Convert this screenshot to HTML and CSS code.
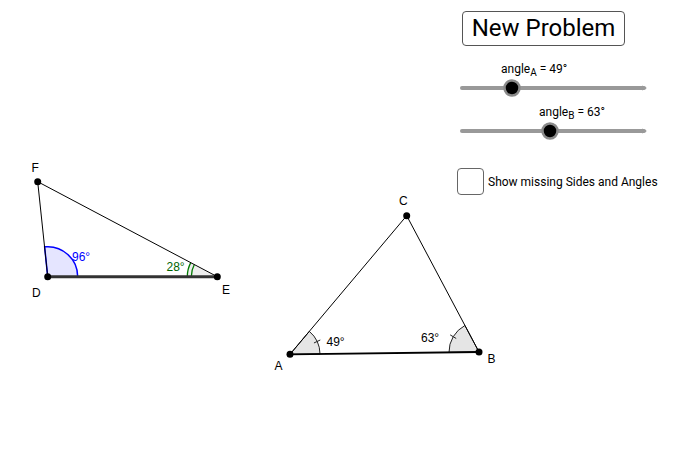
FILE: index.html
```html
<!DOCTYPE html>
<html>
<head>
<meta charset="utf-8">
<link rel="stylesheet" href="styles.css">
</head>
<body>
<div class="stage">
  <svg class="canvas" width="684" height="469" viewBox="0 0 684 469">
    <!-- Triangle DEF -->
    <path class="sector-blue" d="M47.7 276.7 L77.7 276.7 A30 30 0 0 0 44.64 246.86 Z"/>
    <path class="sector-gray" d="M217.3 276.7 L187.3 276.7 A30 30 0 0 1 190.78 262.67 Z"/>
    <path class="arc-green" d="M187.3 276.7 A30 30 0 0 1 190.78 262.67"/>
    <path class="arc-green" d="M191.3 276.7 A26 26 0 0 1 194.32 264.54"/>
    <line class="side" x1="37.7" y1="181.7" x2="47.7" y2="276.7"/>
    <line class="side" x1="37.7" y1="181.7" x2="217.3" y2="276.7"/>
    <line class="side-thick" x1="47.7" y1="276.7" x2="217.3" y2="276.7"/>

    <!-- Triangle ABC -->
    <path class="sector-gray2" d="M290 354.3 L320 353.94 A30 30 0 0 0 309.32 331.35 Z"/>
    <path class="sector-gray2" d="M479 352 L449 352.37 A30 30 0 0 1 464.94 325.5 Z"/>
    <line class="tick" x1="313.96" y1="342.98" x2="320.28" y2="339.99"/>
    <line class="tick" x1="456.21" y1="338.47" x2="450.19" y2="334.9"/>
    <line class="side" x1="290" y1="354.3" x2="406.7" y2="215.7"/>
    <line class="side" x1="479" y1="352" x2="406.7" y2="215.7"/>
    <line class="side-mid" x1="290" y1="354.3" x2="479" y2="352"/>

    <!-- points -->
    <circle class="pt" cx="37.7" cy="181.7" r="3.5"/>
    <circle class="pt" cx="47.7" cy="276.7" r="3.5"/>
    <circle class="pt" cx="217.3" cy="276.7" r="3.5"/>
    <circle class="pt" cx="290" cy="354.3" r="3.5"/>
    <circle class="pt" cx="479" cy="352" r="3.5"/>
    <circle class="pt" cx="406.7" cy="215.7" r="3.5"/>

    <!-- labels -->
    <text class="lbl" x="31.5" y="172">F</text>
    <text class="lbl" x="32" y="297">D</text>
    <text class="lbl" x="222" y="294">E</text>
    <text class="lbl" x="399" y="205">C</text>
    <text class="lbl" x="274.5" y="370">A</text>
    <text class="lbl" x="487.5" y="363">B</text>
    <text class="lbl blue" x="72" y="261">96°</text>
    <text class="lbl green" x="166.5" y="271">28°</text>
    <text class="lbl" x="326.5" y="346">49°</text>
    <text class="lbl" x="421" y="342">63°</text>

    <!-- sliders -->
    <line class="track" x1="462" y1="88" x2="644" y2="88"/>
    <path class="arrow" d="M642 85.5 L647 88 L642 90.5 Z"/>
    <circle class="knob" cx="512" cy="88" r="7.5"/>
    <text class="slabel" x="501" y="73">angle<tspan class="sub" dy="3">A</tspan><tspan dy="-3"> = 49°</tspan></text>

    <line class="track" x1="462" y1="131" x2="644" y2="131"/>
    <path class="arrow" d="M642 128.5 L647 131 L642 133.5 Z"/>
    <circle class="knob" cx="550" cy="131" r="7.5"/>
    <text class="slabel" x="539" y="116">angle<tspan class="sub" dy="3">B</tspan><tspan dy="-3"> = 63°</tspan></text>
  </svg>

  <button class="newbtn">New Problem</button>

  <label class="check">
    <span class="box"></span>
    <span class="check-text">Show missing Sides and Angles</span>
  </label>
</div>
</body>
</html>
```

FILE: styles.css
```css
html, body {
  margin: 0;
  padding: 0;
  background: #ffffff;
  overflow: hidden;
}

.stage {
  position: relative;
  width: 684px;
  height: 469px;
  background: #ffffff;
}

.canvas {
  position: absolute;
  left: 0;
  top: 0;
}

.side {
  stroke: #000000;
  stroke-width: 1;
}

.side-mid {
  stroke: #000000;
  stroke-width: 1.8;
}

.side-thick {
  stroke: #333333;
  stroke-width: 3;
}

.sector-blue {
  fill: rgba(0, 0, 255, 0.1);
  stroke: #0000ff;
  stroke-width: 1.5;
}

.sector-gray {
  fill: #eeeeee;
  stroke: none;
}

.arc-green {
  fill: none;
  stroke: #007a00;
  stroke-width: 1.3;
}

.sector-gray2 {
  fill: #e5e5e5;
  stroke: #222222;
  stroke-width: 1;
}

.tick {
  stroke: #222222;
  stroke-width: 1;
}

.pt {
  fill: #000000;
}

.lbl {
  font-family: "Liberation Sans", Arial, sans-serif;
  font-size: 12px;
  fill: #000000;
}

.lbl.blue {
  fill: #0000ff;
}

.lbl.green {
  fill: #006400;
}

.track {
  stroke: #999999;
  stroke-width: 4;
  stroke-linecap: round;
}

.arrow {
  fill: #999999;
}

.knob {
  fill: #000000;
  stroke: #8a8a8a;
  stroke-width: 2.5;
}

.slabel {
  font-family: Roboto, "Liberation Sans", sans-serif;
  font-size: 12px;
  fill: #000000;
}

.slabel .sub {
  font-size: 10px;
}

.newbtn {
  position: absolute;
  left: 462px;
  top: 11px;
  width: 163px;
  height: 35px;
  margin: 0;
  padding: 0;
  background: #ffffff;
  border: 1px solid #555555;
  border-radius: 4px;
  font-family: Roboto, "Liberation Sans", sans-serif;
  font-size: 24px;
  color: #000000;
  line-height: 33px;
  text-align: center;
}

.check {
  position: absolute;
  left: 457px;
  top: 168px;
  display: flex;
  align-items: center;
  gap: 4px;
}

.box {
  width: 25px;
  height: 25px;
  border: 1px solid #666666;
  border-radius: 4px;
  background: #ffffff;
}

.check-text {
  font-family: Roboto, "Liberation Sans", sans-serif;
  font-size: 12px;
  color: #000000;
}
```
